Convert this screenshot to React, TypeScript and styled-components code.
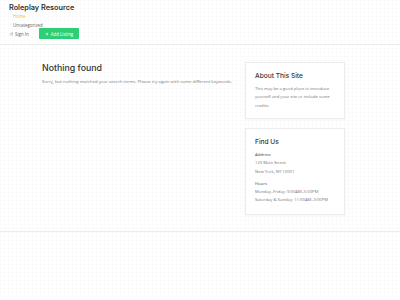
import React from "react";
import styled, { createGlobalStyle } from "styled-components";

const Global = createGlobalStyle`
  html, body { margin: 0; padding: 0; }
  body {
    width: 400px;
    height: 300px;
    overflow: hidden;
    font-family: "Open Sans", "Liberation Sans", sans-serif;
    color: #555;
    background-color: #ffffff;
    background-image:
      linear-gradient(to right, rgba(0,0,0,0.012) 1px, transparent 1px),
      linear-gradient(to bottom, rgba(0,0,0,0.012) 1px, transparent 1px);
    background-size: 4px 4px;
  }
`;

const Page = styled.div`
  width: 400px;
  height: 300px;
  display: flex;
  flex-direction: column;
`;

const Header = styled.header`
  padding: 3px 0 0 9px;
  height: 41px;
  border-bottom: 1px solid #ececec;
  display: flex;
  flex-direction: column;
`;

const SiteTitle = styled.div`
  font-family: "Inter", "Liberation Sans", sans-serif;
  font-weight: 600;
  font-size: 7.3px;
  line-height: 9px;
  color: #333;
`;

const NavList = styled.div`
  display: flex;
  flex-direction: column;
  padding-left: 4px;
`;

const NavLink = styled.span<{ $active?: boolean }>`
  font-size: 4.4px;
  line-height: 8.5px;
  height: 8.5px;
  color: ${(p) => (p.$active ? "#f2c32b" : "#666")};
`;

const ActionRow = styled.div`
  display: flex;
  align-items: center;
  margin-top: -1px;
`;

const SignIn = styled.span`
  display: flex;
  align-items: center;
  gap: 2px;
  font-size: 4.4px;
  color: #666;
  width: 30px;
`;

const AddButton = styled.span`
  display: flex;
  align-items: center;
  justify-content: center;
  gap: 2px;
  width: 40px;
  height: 11px;
  background: #2ccf74;
  color: #fff;
  font-size: 4.4px;
  border-radius: 1px;
  box-shadow: 0 0 1px rgba(0,0,0,0.15);
`;

const Main = styled.main`
  display: flex;
  gap: 9px;
  padding: 17px 0 0 42px;
  height: 169px;
  border-bottom: 1px solid #ececec;
`;

const Content = styled.section`
  width: 194px;
  display: flex;
  flex-direction: column;
`;

const PageTitle = styled.h1`
  margin: 0;
  font-family: "Inter", "Liberation Sans", sans-serif;
  font-weight: 500;
  font-size: 8.8px;
  line-height: 11px;
  color: #333;
`;

const Body = styled.p`
  margin: 4px 0 0;
  font-size: 4.35px;
  line-height: 8px;
  color: #7a7a7a;
  white-space: nowrap;
`;

const Sidebar = styled.aside`
  display: flex;
  flex-direction: column;
  gap: 9px;
  width: 100px;
`;

const Card = styled.div<{ $h: number }>`
  box-sizing: border-box;
  height: ${(p) => p.$h}px;
  border: 1px solid #ececec;
  background: #fff;
  box-shadow: 0 1px 2px rgba(0,0,0,0.04);
  padding: 8px 9px;
`;

const CardTitle = styled.h2`
  margin: 0 0 4px;
  font-family: "Inter", "Liberation Sans", sans-serif;
  font-weight: 500;
  font-size: 6.6px;
  line-height: 10px;
  color: #333;
`;

const CardText = styled.div<{ $dark?: boolean; $gap?: boolean }>`
  font-size: 4.2px;
  line-height: 8.3px;
  color: ${(p) => (p.$dark ? "#444" : "#777")};
  margin-top: ${(p) => (p.$gap ? "4px" : "0")};
  white-space: nowrap;
`;

export default function App() {
  return (
    <Page>
      <Global />
      <Header>
        <SiteTitle>Roleplay Resource</SiteTitle>
        <NavList>
          <NavLink $active>Home</NavLink>
          <NavLink>Uncategorized</NavLink>
        </NavList>
        <ActionRow>
          <SignIn>
            <svg width="4" height="4" viewBox="0 0 24 24" fill="none" stroke="#888" strokeWidth="2.5">
              <path d="M15 3h4a2 2 0 0 1 2 2v14a2 2 0 0 1-2 2h-4" />
              <path d="M10 17l5-5-5-5" />
              <path d="M15 12H3" />
            </svg>
            Sign In
          </SignIn>
          <AddButton>
            <svg width="4" height="4" viewBox="0 0 24 24" fill="none" stroke="#fff" strokeWidth="4">
              <path d="M12 4v16M4 12h16" />
            </svg>
            Add Listing
          </AddButton>
        </ActionRow>
      </Header>
      <Main>
        <Content>
          <PageTitle>Nothing found</PageTitle>
          <Body>Sorry, but nothing matched your search terms. Please try again with some different keywords.</Body>
        </Content>
        <Sidebar>
          <Card $h={57}>
            <CardTitle>About This Site</CardTitle>
            <CardText>This may be a good place to introduce</CardText>
            <CardText>yourself and your site or include some</CardText>
            <CardText>credits.</CardText>
          </Card>
          <Card $h={87}>
            <CardTitle>Find Us</CardTitle>
            <CardText $dark>Address</CardText>
            <CardText>123 Main Street</CardText>
            <CardText>New York, NY 10001</CardText>
            <CardText $dark $gap>Hours</CardText>
            <CardText>Monday–Friday: 9:00AM–5:00PM</CardText>
            <CardText>Saturday &amp; Sunday: 11:00AM–3:00PM</CardText>
          </Card>
        </Sidebar>
      </Main>
    </Page>
  );
}
